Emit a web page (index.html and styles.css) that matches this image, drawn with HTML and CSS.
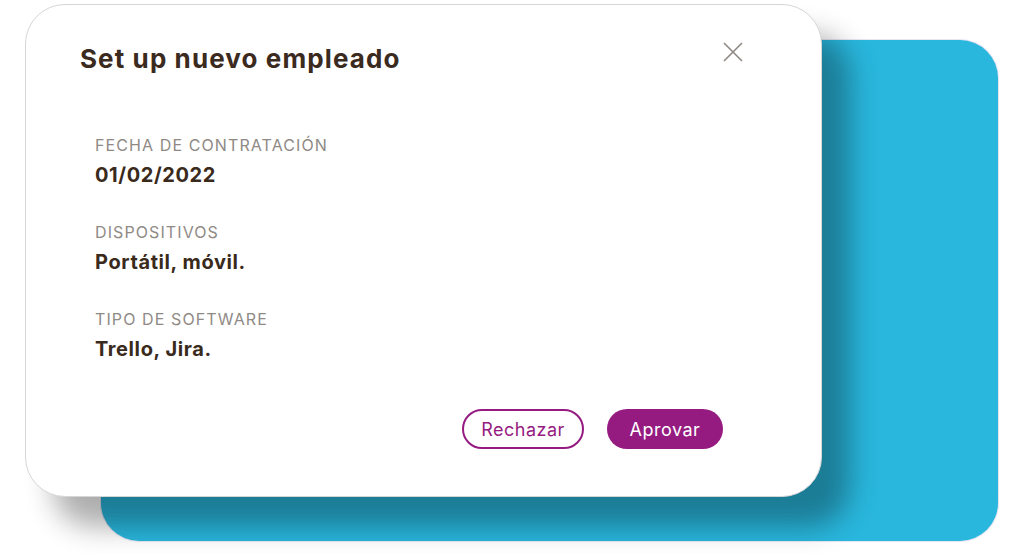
FILE: index.html
```html
<!DOCTYPE html>
<html lang="es">
<head>
  <meta charset="UTF-8">
  <title>Set up nuevo empleado</title>
  <link rel="stylesheet" href="styles.css">
</head>
<body>
  <div class="stage">
    <div class="backdrop"></div>

    <div class="dialog">
      <div class="dialog-header">
        <h1>Set up nuevo empleado</h1>
        <button class="close" aria-label="Cerrar">
          <svg width="20" height="20" viewBox="0 0 20 20">
            <path d="M1 1 L19 19 M19 1 L1 19" stroke="#8d8782" stroke-width="1.6" fill="none"/>
          </svg>
        </button>
      </div>

      <div class="fields">
        <div class="field">
          <div class="label">FECHA DE CONTRATACIÓN</div>
          <div class="value">01/02/2022</div>
        </div>
        <div class="field">
          <div class="label">DISPOSITIVOS</div>
          <div class="value">Portátil, móvil.</div>
        </div>
        <div class="field">
          <div class="label">TIPO DE SOFTWARE</div>
          <div class="value">Trello, Jira.</div>
        </div>
      </div>

      <div class="actions">
        <button class="btn btn-outline">Rechazar</button>
        <button class="btn btn-fill">Aprovar</button>
      </div>
    </div>
  </div>
</body>
</html>
```

FILE: styles.css
```css
body {
  margin: 0;
  background: #fff;
  font-family: Inter, "Noto Sans", sans-serif;
}
.stage {
  display: grid;
  width: 1024px;
  height: 554px;
  overflow: hidden;
}
.backdrop,
.dialog {
  grid-area: 1 / 1;
  box-sizing: border-box;
}
.backdrop {
  margin: 40px 0 0 101px;
  width: 897px;
  height: 501px;
  background: #29b7dd;
  border-radius: 38px;
  box-shadow: 0 0 0 1px rgba(190, 180, 220, 0.35);
}
.dialog {
  position: relative;
  z-index: 1;
  margin: 4px 0 0 25px;
  width: 797px;
  height: 493px;
  padding: 37px 78px 0 55px;
  background: #fff;
  border-radius: 40px;
  border: 1px solid #d6d6d6;
  box-shadow: 28px 30px 28px rgba(0, 0, 0, 0.32);
}
.dialog-header {
  display: flex;
  justify-content: space-between;
  align-items: flex-start;
}
h1 {
  margin: 2px 0 0 -1px;
  font-size: 26px;
  line-height: 30px;
  font-weight: 700;
  letter-spacing: 1.1px;
  color: #3b2a1e;
}
.close {
  border: none;
  background: none;
  padding: 0;
  width: 20px;
  height: 20px;
  cursor: pointer;
}
.close svg {
  display: block;
}
.fields {
  display: flex;
  flex-direction: column;
  gap: 35px;
  margin-top: 61px;
  padding-left: 14px;
}
.field {
  display: flex;
  flex-direction: column;
  gap: 8px;
}
.label {
  font-size: 16px;
  line-height: 20px;
  letter-spacing: 1.1px;
  color: #8f8a85;
}
.value {
  font-size: 20px;
  line-height: 24px;
  font-weight: 700;
  letter-spacing: 0.6px;
  color: #3a2a1c;
}
.actions {
  display: flex;
  justify-content: flex-end;
  gap: 23px;
  margin-top: 48px;
  margin-right: 20px;
}
.btn {
  box-sizing: border-box;
  height: 40px;
  border-radius: 20px;
  font-family: Inter, "Noto Sans", sans-serif;
  font-size: 18px;
  letter-spacing: 0.5px;
  cursor: pointer;
}
.btn-outline {
  width: 122px;
  background: #fff;
  border: 2px solid #951b81;
  color: #951b81;
}
.btn-fill {
  width: 116px;
  background: #951b81;
  border: none;
  color: #fff;
}
```
